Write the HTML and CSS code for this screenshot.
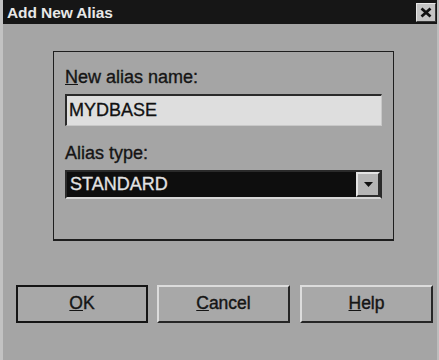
FILE: index.html
```html
<!DOCTYPE html>
<html>
<head>
<meta charset="utf-8">
<link rel="stylesheet" href="styles.css">
</head>
<body>
<div class="window">
  <div class="titlebar">
    <span class="title">Add New Alias</span>
    <span class="close">
      <svg width="12" height="11" viewBox="0 0 12 11"><path d="M1.5 1.5 L10.5 9.5 M10.5 1.5 L1.5 9.5" stroke="#111" stroke-width="2.8"/></svg>
    </span>
  </div>
  <div class="content">
    <div class="group">
      <div class="label"><u>N</u>ew alias name:</div>
      <div class="input">MYDBASE</div>
      <div class="label label2">Alias type:</div>
      <div class="combo">
        <div class="combo-text">STANDARD</div>
        <div class="combo-btn">
          <svg width="9" height="5" viewBox="0 0 9 5"><path d="M0 0 H9 L4.5 5 Z" fill="#111"/></svg>
        </div>
      </div>
    </div>
    <div class="buttons">
      <div class="btn btn-default"><span><u>O</u>K</span></div>
      <div class="btn btn-cancel"><span><u>C</u>ancel</span></div>
      <div class="btn btn-help"><span><u>H</u>elp</span></div>
    </div>
  </div>
</div>
</body>
</html>
```
FILE: styles.css
```css
html, body {
  margin: 0;
  padding: 0;
  background: #a5a5a5;
}
.window {
  width: 439px;
  height: 360px;
  background: #a5a5a5;
  font-family: "Liberation Sans", Arial, sans-serif;
  color: #151515;
  overflow: hidden;
  box-sizing: border-box;
  border-left: 3px solid #c2c2c2;
  border-right: 2px solid #bdbdbd;
}
.titlebar {
  height: 24px;
  background: #161616;
  display: flex;
  align-items: center;
  justify-content: space-between;
  padding: 0 1px 0 4px;
  box-sizing: border-box;
}
.title {
  color: #e8e8e8;
  font-weight: bold;
  font-size: 15.5px;
  letter-spacing: -0.1px;
  margin-top: 1px;
}
.close {
  width: 20px;
  height: 19px;
  background: #c4c4c4;
  box-sizing: border-box;
  border: 1px solid;
  border-color: #e6e6e6 #3a3a3a #3a3a3a #e6e6e6;
  display: flex;
  align-items: center;
  justify-content: center;
}
.content {
  padding: 27px 0 0 50px;
}
.group {
  width: 341px;
  height: 190px;
  box-sizing: border-box;
  border: 1.5px solid #1e1e1e;
  border-bottom-width: 2px;
  padding: 15px 0 0 11px;
}
.label {
  font-size: 18px;
  line-height: 20px;
  color: #151515;
  -webkit-text-stroke: 0.35px #151515;
}
.label2 {
  margin-top: 17px;
}
.input {
  margin-top: 7px;
  width: 317px;
  height: 32px;
  box-sizing: border-box;
  background: #dedede;
  border-top: 2px solid #2a2a2a;
  border-left: 2px solid #2a2a2a;
  border-right: 1px solid #c8c8c8;
  border-bottom: 1px solid #c8c8c8;
  font-size: 18px;
  line-height: 29px;
  padding-left: 2px;
  color: #111;
  -webkit-text-stroke: 0.3px #111;
}
.combo {
  margin-top: 7px;
  width: 317px;
  height: 29px;
  box-sizing: border-box;
  display: flex;
  border: 2px solid #2a2a2a;
  border-bottom: 2px solid #d6d6d6;
  background: #0e0e0e;
}
.combo-text {
  flex: 1;
  color: #e2e2e2;
  font-size: 18px;
  line-height: 25px;
  padding-left: 3px;
  -webkit-text-stroke: 0.3px #e2e2e2;
}
.combo-btn {
  width: 24px;
  background: #b5b5b5;
  box-sizing: border-box;
  border: 2px solid;
  border-color: #e4e4e4 #2e2e2e #2e2e2e #e4e4e4;
  display: flex;
  align-items: center;
  justify-content: center;
}
.buttons {
  display: flex;
  gap: 9px;
  margin: 44px 0 0 -37px;
}
.btn {
  width: 133px;
  height: 38px;
  box-sizing: border-box;
  background: #a8a8a8;
  display: flex;
  align-items: center;
  justify-content: center;
  font-size: 17.5px;
  color: #151515;
  -webkit-text-stroke: 0.4px #151515;
}
.btn span {
  margin-top: -1px;
}
.btn-default {
  width: 132px;
  border: 2px solid #151515;
}
.btn-cancel,
.btn-help {
  border: 2px solid;
  border-color: #dcdcdc #262626 #262626 #dcdcdc;
}
.btn-help {
  margin-left: 1px;
}
```
